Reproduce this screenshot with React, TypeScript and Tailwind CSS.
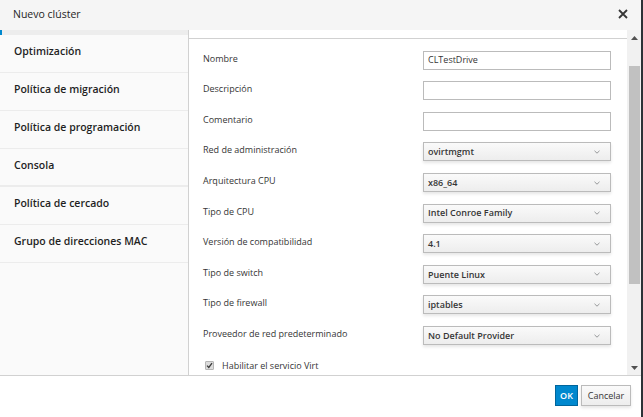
import React from "react";

const rows: { label: string; value: string; kind: "input" | "select" }[] = [
  { label: "Nombre", value: "CLTestDrive", kind: "input" },
  { label: "Descripción", value: "", kind: "input" },
  { label: "Comentario", value: "", kind: "input" },
  { label: "Red de administración", value: "ovirtmgmt", kind: "select" },
  { label: "Arquitectura CPU", value: "x86_64", kind: "select" },
  { label: "Tipo de CPU", value: "Intel Conroe Family", kind: "select" },
  { label: "Versión de compatibilidad", value: "4.1", kind: "select" },
  { label: "Tipo de switch", value: "Puente Linux", kind: "select" },
  { label: "Tipo de firewall", value: "iptables", kind: "select" },
  { label: "Proveedor de red predeterminado", value: "No Default Provider", kind: "select" },
];

const tabs = [
  "Optimización",
  "Política de migración",
  "Política de programación",
  "Consola",
  "Política de cercado",
  "Grupo de direcciones MAC",
];

function Chevron() {
  return (
    <svg width="6" height="4" viewBox="0 0 6 4" className="shrink-0">
      <path d="M0.5 0.8 L3 3.2 L5.5 0.8" fill="none" stroke="#8b8d8f" strokeWidth="0.9" />
    </svg>
  );
}

export default function App() {
  return (
    <div className="w-[643px] h-[417px] flex bg-white text-[#363636] font-['Open_Sans',sans-serif] overflow-hidden">
      <div className="w-[641px] flex flex-col">
        {/* header */}
        <div className="h-[30px] bg-[#f5f5f5] flex items-center justify-between pl-[13px] pr-[13px] pb-[2px] shrink-0">
          <span className="text-[10.5px] leading-[14px] text-[#1f1f1f]">Nuevo clúster</span>
          <svg width="10" height="10" viewBox="0 0 10 10">
            <path d="M1 1 L9 9 M9 1 L1 9" stroke="#363636" strokeWidth="1.8" />
          </svg>
        </div>

        {/* body */}
        <div className="h-[345px] flex shrink-0">
          {/* sidebar */}
          <div className="w-[189px] border-r border-[#d1d1d1] bg-[#fafafa] flex flex-col shrink-0">
            <div className="h-[5px] bg-[#ededed] border-l-2 border-[#0088ce]" />
            {tabs.map((t) => (
              <div
                key={t}
                className={`h-[38px] pl-[14px] pt-[8px] text-[10.5px] leading-[16px] font-semibold text-[#1f1f1f] ${
                  t === "Consola" ? "border-b-2" : "border-b"
                } border-[#ececec]`}
              >
                {t}
              </div>
            ))}
          </div>

          {/* content */}
          <div className="flex-1 bg-white overflow-hidden flex flex-col">
            <div className="h-[8px] shrink-0" />
            <div className="border-t border-[#d1d1d1] pt-[11.7px] flex flex-col">
              {rows.map((r) => (
                <div key={r.label} className="h-[30.6px] flex items-start shrink-0">
                  <div className="w-[234px] pl-[14px] text-[9px] leading-[16px] text-[#363636]">
                    {r.label}
                  </div>
                  {r.kind === "input" ? (
                    <div className="w-[188px] h-[19px] border border-[#bbbbbb] bg-white flex items-center pl-[4px] text-[9px] text-[#363636]">
                      {r.value}
                    </div>
                  ) : (
                    <div className="w-[188px] h-[19px] border border-[#bbbbbb] bg-linear-to-b from-[#fafafa] to-[#ededed] shadow-[0_2px_3px_rgba(3,3,3,0.1)] flex items-center justify-between pl-[4px] pr-[10px] text-[9px] font-semibold text-[#363636]">
                      <span>{r.value}</span>
                      <Chevron />
                    </div>
                  )}
                </div>
              ))}
              <div className="h-[20px] flex items-center pl-[16px] gap-[8px] -mt-[1px]">
                <div className="w-[9px] h-[9px] rounded-[1px] bg-[#dcdcdc] border border-[#b5b5b5] flex items-center justify-center">
                  <svg width="7" height="7" viewBox="0 0 7 7">
                    <path d="M1 3.6 L2.8 5.4 L6 1.2" fill="none" stroke="#3a3a3a" strokeWidth="1.3" />
                  </svg>
                </div>
                <span className="text-[9px] text-[#363636]">Habilitar el servicio Virt</span>
              </div>
            </div>
          </div>

          {/* scrollbar */}
          <div className="w-[14px] bg-[#f1f1f1] flex flex-col items-center shrink-0">
            <div className="h-[15px] flex items-center justify-center">
              <svg width="7" height="4" viewBox="0 0 7 4">
                <path d="M0 4 L3.5 0 L7 4 Z" fill="#505050" />
              </svg>
            </div>
            <div className="mt-[21px] w-[11px] h-[218px] bg-[#c1c1c1]" />
            <div className="flex-1" />
            <div className="h-[15px] flex items-center justify-center">
              <svg width="7" height="4" viewBox="0 0 7 4">
                <path d="M0 0 L3.5 4 L7 0 Z" fill="#505050" />
              </svg>
            </div>
          </div>
        </div>

        {/* footer */}
        <div className="h-[42px] border-t border-[#d1d1d1] flex justify-end items-start pt-[9px] pr-[10px] gap-[3px] shrink-0">
          <div className="h-[21px] w-[23px] bg-[#0088ce] border border-[#00659c] text-white text-[9px] font-semibold flex items-center justify-center">
            OK
          </div>
          <div className="h-[21px] w-[50px] border border-[#bbbbbb] bg-linear-to-b from-[#fafafa] to-[#ededed] shadow-[0_2px_3px_rgba(3,3,3,0.1)] text-[9px] text-[#363636] flex items-center justify-center">
            Cancelar
          </div>
        </div>
      </div>
      <div className="w-[2px] bg-[#2c3237]" />
    </div>
  );
}
